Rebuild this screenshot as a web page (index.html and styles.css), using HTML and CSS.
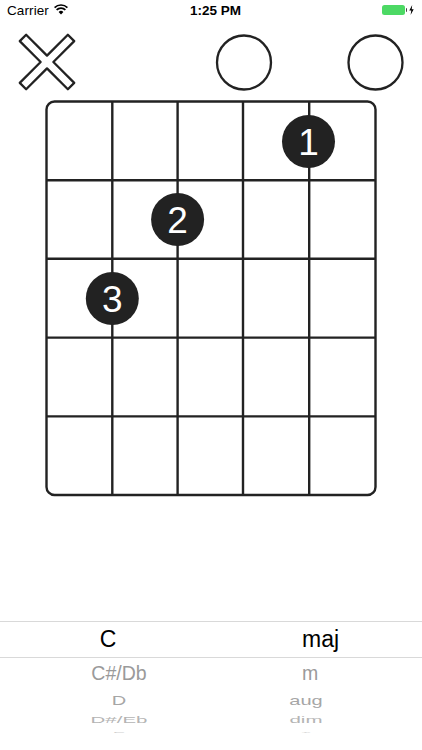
FILE: index.html
```html
<!DOCTYPE html>
<html>
<head>
<meta charset="utf-8">
<link rel="stylesheet" href="styles.css">
</head>
<body>
<div class="screen">
  <div class="status">
    <div class="status-left">
      <span class="carrier">Carrier</span>
      <svg class="wifi" width="14" height="11" viewBox="0 0 14 11">
        <path d="M7 10.5 L4.6 7.9 A3.6 3.6 0 0 1 9.4 7.9 Z" fill="#000"/>
        <path d="M2.6 5.9 A6.3 6.3 0 0 1 11.4 5.9" fill="none" stroke="#000" stroke-width="1.7"/>
        <path d="M0.6 3.6 A9.2 9.2 0 0 1 13.4 3.6" fill="none" stroke="#000" stroke-width="1.7"/>
      </svg>
    </div>
    <div class="status-time">1:25 PM</div>
    <div class="status-right">
      <span class="battery"><span class="battery-fill"></span></span><span class="battery-nub"></span>
      <svg class="bolt" width="5" height="10" viewBox="0 0 5 10"><path d="M3.2 0 L0.3 5.6 H2.3 L1.6 10 L4.7 4.2 H2.7 Z" fill="#000"/></svg>
    </div>
  </div>

  <svg class="chord" width="422" height="480" viewBox="0 20 422 480">
    <g transform="translate(47 62) rotate(45)">
      <path d="M4.5 -34 L4.5 -4.5 L34 -4.5 L34 4.5 L4.5 4.5 L4.5 34 L-4.5 34 L-4.5 4.5 L-34 4.5 L-34 -4.5 L-4.5 -4.5 L-4.5 -34 Z" fill="none" stroke="#222" stroke-width="2.3" stroke-linejoin="round"/>
    </g>
    <circle cx="244" cy="62.5" r="27" fill="none" stroke="#222" stroke-width="2.3"/>
    <circle cx="375.5" cy="62.5" r="27" fill="none" stroke="#222" stroke-width="2.3"/>

    <rect x="46.5" y="101.5" width="329" height="393.5" rx="8" ry="8" fill="none" stroke="#222" stroke-width="2.4"/>
    <g stroke="#222" stroke-width="2.4">
      <line x1="112.3" y1="101.5" x2="112.3" y2="495"/>
      <line x1="177.6" y1="101.5" x2="177.6" y2="495"/>
      <line x1="243" y1="101.5" x2="243" y2="495"/>
      <line x1="309.2" y1="101.5" x2="309.2" y2="495"/>
      <line x1="46.5" y1="180.2" x2="375.5" y2="180.2"/>
      <line x1="46.5" y1="258.8" x2="375.5" y2="258.8"/>
      <line x1="46.5" y1="337.6" x2="375.5" y2="337.6"/>
      <line x1="46.5" y1="416.4" x2="375.5" y2="416.4"/>
    </g>
    <circle cx="308.5" cy="141.5" r="26.5" fill="#222"/>
    <circle cx="177.6" cy="219.5" r="26.5" fill="#222"/>
    <circle cx="112.3" cy="298.5" r="26.5" fill="#222"/>
    <text class="finger" x="308.5" y="154.5">1</text>
    <text class="finger" x="177.6" y="232.5">2</text>
    <text class="finger" x="112.3" y="311.5">3</text>
  </svg>

  <div class="spacer"></div>

  <div class="picker">
    <div class="picker-selected">
      <div class="col col-left sel-left">C</div>
      <div class="col col-right sel-right">maj</div>
    </div>
    <div class="picker-row row1">
      <div class="col col-left off-left">C#/Db</div>
      <div class="col col-right off-right1">m</div>
    </div>
    <div class="picker-row row2">
      <div class="col col-left off-left squash2">D</div>
      <div class="col col-right off-right squash2">aug</div>
    </div>
    <div class="picker-row row3">
      <div class="col col-left off-left squash3">D#/Eb</div>
      <div class="col col-right off-right squash3">dim</div>
    </div>
    <div class="picker-row row4">
      <div class="col col-left off-left squash4">E</div>
      <div class="col col-right off-right squash4">7</div>
    </div>
  </div>
</div>
</body>
</html>
```

FILE: styles.css
```css
html, body {
  margin: 0;
  padding: 0;
  background: #fff;
}

.screen {
  width: 422px;
  height: 750px;
  overflow: hidden;
  font-family: "Liberation Sans", Arial, sans-serif;
  color: #000;
}

.status {
  height: 20px;
  display: flex;
  align-items: center;
  font-size: 13.5px;
}

.status-left {
  display: flex;
  align-items: center;
  gap: 5px;
  padding-left: 7px;
  width: 150px;
}

.carrier {
  letter-spacing: 0.1px;
}

.wifi {
  margin-top: -1px;
}

.status-time {
  flex: 1;
  text-align: center;
  font-weight: 600;
  padding-left: 4px;
  padding-right: 2px;
}

.status-right {
  width: 150px;
  display: flex;
  align-items: center;
  justify-content: flex-end;
  padding-right: 8px;
  box-sizing: border-box;
}

.battery {
  width: 23px;
  height: 10px;
  box-sizing: border-box;
  border-radius: 2.5px;
  display: flex;
}

.battery-fill {
  flex: 1;
  background: #4cd964;
  border-radius: 2.5px;
}

.battery-nub {
  width: 1.5px;
  height: 4px;
  background: #444;
  margin-left: 1px;
  border-radius: 0 1px 1px 0;
}

.bolt {
  margin-left: 2px;
}

.chord {
  display: block;
}

.finger {
  font-family: "Liberation Sans", Arial, sans-serif;
  font-size: 37px;
  fill: #fff;
  text-anchor: middle;
}

.spacer {
  height: 121px;
}

.picker {
  border-top: 1px solid #d9d9d9;
}

.picker-selected {
  height: 35px;
  display: flex;
  align-items: center;
  border-bottom: 1px solid #d9d9d9;
  font-size: 23px;
  color: #000;
}

.picker-row {
  display: flex;
  align-items: center;
}

.col {
  width: 211px;
  text-align: center;
  box-sizing: border-box;
}

.sel-left {
  padding-left: 5px;
}

.sel-right {
  padding-left: 8px;
}

.off-left {
  padding-left: 27px;
}

.off-right1 {
  padding-right: 13px;
}

.off-right {
  padding-right: 21px;
}

.row1 {
  height: 30px;
  font-size: 19.5px;
  color: #9a9a9a;
}

.row2 {
  height: 24px;
  font-size: 20px;
  color: #a6a6a6;
}

.squash2 {
  transform: scaleY(0.68);
}

.row3 {
  height: 15px;
  font-size: 20.5px;
  color: #b4b4b4;
}

.squash3 {
  transform: scaleY(0.42);
}

.row4 {
  height: 10px;
  font-size: 18px;
  color: #d0d0d0;
}

.squash4 {
  transform: scaleY(0.12);
}
```
